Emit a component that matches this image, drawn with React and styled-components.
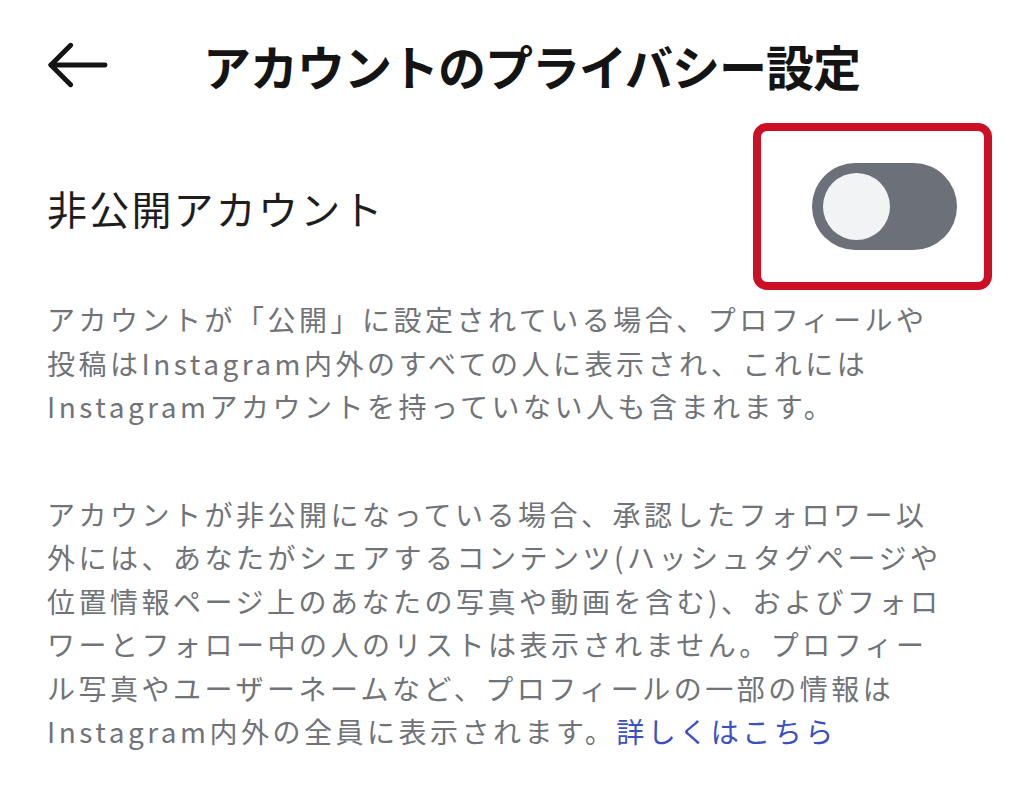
import React from "react";
import styled, { createGlobalStyle } from "styled-components";

const Global = createGlobalStyle`
  html, body { margin: 0; padding: 0; background: #ffffff; }
  body { font-family: "Noto Sans CJK JP", "Noto Sans", sans-serif; }
`;

const Page = styled.div`
  width: 1024px;
  min-height: 810px;
  box-sizing: border-box;
  padding: 0 32px 0 47px;
  background: #ffffff;
`;

const Header = styled.header`
  display: flex;
  align-items: center;
  height: 60px;
  margin-top: 35px;
  margin-bottom: 28px;
`;

const BackButton = styled.button`
  display: flex;
  align-items: center;
  justify-content: center;
  width: 61px;
  height: 60px;
  padding: 0;
  border: none;
  background: none;
  color: #141414;
`;

const Title = styled.h1`
  margin: 0 0 0 95px;
  font-size: 48px;
  line-height: 60px;
  font-weight: 700;
  letter-spacing: -1px;
  color: #141414;
  white-space: nowrap;
`;

const SettingRow = styled.div`
  display: flex;
  align-items: center;
  justify-content: space-between;
`;

const SettingLabel = styled.span`
  font-size: 40px;
  letter-spacing: 2.2px;
  color: #1e1e1e;
  margin-top: 2px;
`;

const Highlight = styled.div`
  box-sizing: border-box;
  width: 239px;
  height: 167px;
  border: 8px solid #cc0f24;
  border-radius: 14px;
  padding: 32px 27px 32px 51px;
`;

const Track = styled.div`
  box-sizing: border-box;
  width: 145px;
  height: 87px;
  border-radius: 44px;
  background: ${(p) => (p.$on ? "#3897f0" : "#6c7079")};
  display: flex;
  align-items: center;
  justify-content: ${(p) => (p.$on ? "flex-end" : "flex-start")};
  padding: 0 11px;
`;

const Knob = styled.div`
  width: 67px;
  height: 67px;
  border-radius: 50%;
  background: #f2f3f5;
`;

const Paragraph = styled.p`
  margin: ${(p) => p.$mt}px 0 0;
  font-size: 28px;
  line-height: 43.5px;
  letter-spacing: 3.5px;
  color: #707378;
  white-space: nowrap;
`;

const Link = styled.a`
  color: #3b4fc4;
  text-decoration: none;
`;

export default function App() {
  return (
    <Page>
      <Global />
      <Header>
        <BackButton aria-label="戻る">
          <svg width="62" height="46" viewBox="0 0 62 46" fill="none" stroke="currentColor" strokeWidth="5" strokeLinecap="round" strokeLinejoin="round">
            <path d="M59 23 H4" />
            <path d="M24 3 L4 23 L24 43" />
          </svg>
        </BackButton>
        <Title>アカウントのプライバシー設定</Title>
      </Header>
      <SettingRow>
        <SettingLabel>非公開アカウント</SettingLabel>
        <Highlight>
          <Track $on={false}>
            <Knob />
          </Track>
        </Highlight>
      </SettingRow>
      <Paragraph $mt={8}>
        アカウントが「公開」に設定されている場合、プロフィールや<br />
        投稿はInstagram内外のすべての人に表示され、これには<br />
        Instagramアカウントを持っていない人も含まれます。
      </Paragraph>
      <Paragraph $mt={64}>
        アカウントが非公開になっている場合、承認したフォロワー以<br />
        外には、あなたがシェアするコンテンツ(ハッシュタグページや<br />
        位置情報ページ上のあなたの写真や動画を含む)、およびフォロ<br />
        ワーとフォロー中の人のリストは表示されません。プロフィー<br />
        ル写真やユーザーネームなど、プロフィールの一部の情報は<br />
        Instagram内外の全員に表示されます。<Link href="#">詳しくはこちら</Link>
      </Paragraph>
    </Page>
  );
}
